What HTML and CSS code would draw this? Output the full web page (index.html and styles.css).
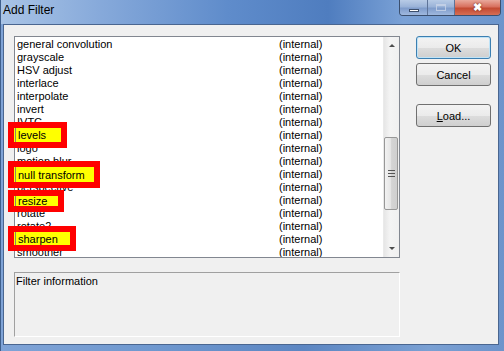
FILE: index.html
```html
<!DOCTYPE html>
<html lang="en">
<head>
    <meta charset="UTF-8">
    <title>Add Filter</title>
    <link rel="stylesheet" href="styles.css">
</head>
<body>

    <div class="window">
        <div class="titlebar">
            <span class="title">Add Filter</span>
            <div class="caption-btns">
                <div class="cap cap-min"><span class="min-glyph"></span></div>
                <div class="cap cap-max"><span class="max-glyph"></span></div>
                <div class="cap cap-close">&#10006;</div>
            </div>
        </div>

        <div class="client">
            <div class="left-col">
                <div class="listbox">
                    <ul class="items">
                        <li><span class="name">general convolution</span><span class="src">(internal)</span></li>
                        <li><span class="name">grayscale</span><span class="src">(internal)</span></li>
                        <li><span class="name">HSV adjust</span><span class="src">(internal)</span></li>
                        <li><span class="name">interlace</span><span class="src">(internal)</span></li>
                        <li><span class="name">interpolate</span><span class="src">(internal)</span></li>
                        <li><span class="name">invert</span><span class="src">(internal)</span></li>
                        <li><span class="name">IVTC</span><span class="src">(internal)</span></li>
                        <li><span class="name">levels</span><span class="src">(internal)</span></li>
                        <li><span class="name">logo</span><span class="src">(internal)</span></li>
                        <li><span class="name">motion blur</span><span class="src">(internal)</span></li>
                        <li><span class="name">null transform</span><span class="src">(internal)</span></li>
                        <li><span class="name">perspective</span><span class="src">(internal)</span></li>
                        <li><span class="name">resize</span><span class="src">(internal)</span></li>
                        <li><span class="name">rotate</span><span class="src">(internal)</span></li>
                        <li><span class="name">rotate2</span><span class="src">(internal)</span></li>
                        <li><span class="name">sharpen</span><span class="src">(internal)</span></li>
                        <li><span class="name">smoother</span><span class="src">(internal)</span></li>
                    </ul>
                    <div class="scrollbar">
                        <div class="arrow arrow-up"></div>
                        <div class="track-top"></div>
                        <div class="thumb"><span class="grip"></span></div>
                        <div class="track-bottom"></div>
                        <div class="arrow arrow-down"></div>
                    </div>
                </div>
                <div class="info">Filter information</div>
            </div>

            <div class="buttons">
                <button class="btn btn-default">OK</button>
                <button class="btn">Cancel</button>
                <button class="btn btn-load"><u>L</u>oad...</button>
            </div>
        </div>

        <!-- annotation boxes drawn over the list -->
        <div class="mark mark-levels"><span class="mark-text">levels</span></div>
        <div class="mark mark-null"><span class="mark-text">null transform</span></div>
        <div class="mark mark-resize"><span class="mark-text">resize</span></div>
        <div class="mark mark-sharpen"><span class="mark-text">sharpen</span></div>
    </div>

</body>
</html>
```

FILE: styles.css
```css
* {
    margin: 0;
    padding: 0;
    box-sizing: border-box;
}
body {
    width: 504px;
    height: 351px;
    overflow: hidden;
    font-family: "Liberation Sans", Arial, sans-serif;
    font-size: 11px;
    color: #000;
}
.window {
    position: relative;
    width: 504px;
    height: 351px;
    background: linear-gradient(90deg, #7fa3d6 0%, #6f98cf 30%, #5c86c2 60%, #7aa0d3 85%, #6d94cb 100%);
    border-left: 1px solid #3f5f8c;
}

/* Title bar */
.titlebar {
    position: relative;
    height: 24px;
    background: linear-gradient(90deg, #a9c4e6 0%, #86a9da 20%, #5f8ccb 45%, #4f7dbf 65%, #7aa1d6 80%, #6c95cc 100%);
}
.title {
    position: absolute;
    left: 2px;
    top: 3px;
    font-size: 12px;
    color: #000;
}
.caption-btns {
    position: absolute;
    top: 0;
    left: 398px;
    display: flex;
    height: 16px;
    border: 1px solid #3b4f6e;
    border-top: none;
    border-radius: 0 0 4px 4px;
    overflow: hidden;
}
.cap {
    height: 15px;
    display: flex;
    align-items: center;
    justify-content: center;
}
.cap-min, .cap-max {
    width: 28px;
    background: linear-gradient(180deg, #b8cbe6 0%, #9ab3d8 45%, #7f9ccb 55%, #9fb8de 100%);
    border-right: 1px solid #5d7398;
}
.cap-max {
    width: 27px;
}
.min-glyph {
    width: 10px;
    height: 3px;
    margin-top: 5px;
    background: #fff;
    border: 1px solid #3d4f6c;
}
.max-glyph {
    width: 10px;
    height: 7px;
    border: 1px solid #c9d5e8;
    border-top-width: 2px;
    opacity: 0.8;
}
.cap-close {
    width: 45px;
    background: linear-gradient(180deg, #e9a99c 0%, #d8705e 45%, #c34a32 55%, #d66e54 100%);
    color: #fff;
    font-size: 11px;
    font-weight: bold;
    text-shadow: 0 0 2px #5a1a10;
}

/* Client area */
.client {
    margin-left: 2px;
    width: 496px;
    height: 321px;
    background: #f0f0f0;
    border: 1px solid #4a6690;
    padding: 11px 0 0 10px;
    display: grid;
    grid-template-columns: 386px 75px;
    column-gap: 16px;
    align-items: start;
}
.listbox {
    height: 222px;
    border: 1px solid #828790;
    background: #fff;
    display: flex;
    overflow: hidden;
}
.items {
    list-style: none;
    flex: 1;
    padding-top: 1px;
    overflow: hidden;
}
.items li {
    display: flex;
    height: 13px;
    line-height: 13px;
    white-space: nowrap;
}
.name {
    width: 264px;
    padding-left: 2px;
}

/* Scrollbar */
.scrollbar {
    width: 16px;
    display: flex;
    flex-direction: column;
    background: linear-gradient(90deg, #e6e6e6, #f4f4f4 40%, #f0f0f0);
    border-left: 1px solid #eaeaea;
}
.arrow {
    height: 17px;
    position: relative;
}
.arrow::after {
    content: "";
    position: absolute;
    left: 5px;
    border-left: 3px solid transparent;
    border-right: 3px solid transparent;
}
.arrow-up::after {
    top: 7px;
    border-bottom: 3px solid #4d4d4d;
}
.arrow-down::after {
    top: 7px;
    border-top: 3px solid #4d4d4d;
}
.track-top {
    height: 83px;
}
.thumb {
    height: 73px;
    margin: 0 1px 0 0;
    border: 1px solid #979797;
    border-radius: 2px;
    background: linear-gradient(90deg, #f2f2f2 0%, #e6e6e6 45%, #d4d4d4 55%, #cfcfcf 100%);
    display: flex;
    align-items: center;
    justify-content: center;
}
.grip {
    width: 7px;
    height: 7px;
    border-top: 1px solid #555;
    border-bottom: 1px solid #555;
    position: relative;
}
.grip::after {
    content: "";
    position: absolute;
    left: 0;
    right: 0;
    top: 2px;
    border-top: 1px solid #555;
}
.track-bottom {
    flex: 1;
}

/* Info panel */
.info {
    margin-top: 14px;
    height: 65px;
    border-top: 1px solid #a0a0a0;
    border-left: 1px solid #a0a0a0;
    border-right: 1px solid #fff;
    border-bottom: 1px solid #fff;
    padding: 2px 0 0 1px;
    background: #f0f0f0;
}

/* Buttons */
.buttons {
    display: flex;
    flex-direction: column;
}
.btn {
    width: 75px;
    height: 23px;
    margin-top: 4px;
    font-family: "Liberation Sans", Arial, sans-serif;
    font-size: 11px;
    color: #000;
    border: 1px solid #707070;
    border-radius: 3px;
    background: linear-gradient(180deg, #f3f3f3 0%, #ebebeb 50%, #dddddd 51%, #cfcfcf 100%);
}
.btn-default {
    margin-top: 0;
    border-color: #3c7fb1;
    box-shadow: inset 0 0 0 1px #bfe3f7;
}
.btn-load {
    margin-top: 18px;
}

/* Yellow + red annotation boxes */
.mark {
    position: absolute;
    left: 7px;
    border: 6px solid #ff0000;
    background: #ffff00;
}
.mark-text {
    height: 100%;
    margin-left: 1px;
    padding-left: 2px;
    border-left: 1px solid #8a8a66;
    display: flex;
    align-items: center;
    white-space: nowrap;
}
.mark-levels {
    top: 122px;
    width: 59px;
    height: 26px;
}
.mark-null {
    top: 161px;
    width: 92px;
    height: 27px;
}
.mark-resize {
    top: 190px;
    width: 56px;
    height: 22px;
}
.mark-sharpen {
    top: 226px;
    width: 68px;
    height: 25px;
}
```
